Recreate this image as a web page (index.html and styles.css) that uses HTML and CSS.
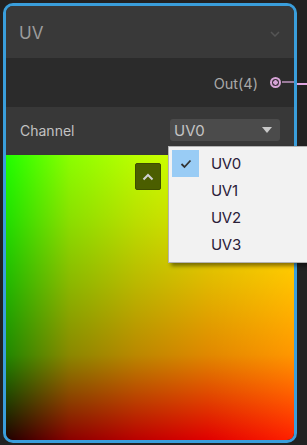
FILE: index.html
```html
<!DOCTYPE html>
<html lang="en">
  <head>
    <meta charset="UTF-8" />
    <meta name="viewport" content="width=device-width, initial-scale=1.0" />
    <title>UV Node</title>
    <link rel="stylesheet" href="styles.css">
  </head>
  <body>
    <div class="canvas">
      <div class="wire"></div>
      <div class="node">
        <div class="node-header">
          <span class="node-title">UV</span>
          <svg class="node-chevron" width="10" height="6" viewBox="0 0 10 6">
            <path d="M1 1 L5 5 L9 1" fill="none" stroke="#555" stroke-width="1.5" />
          </svg>
        </div>
        <div class="node-outputs">
          <span class="port-label">Out(4)</span>
          <span class="port"></span>
        </div>
        <div class="node-controls">
          <span class="control-label">Channel</span>
          <div class="select">
            <span>UV0</span>
            <svg width="10" height="6" viewBox="0 0 10 6">
              <path d="M0 0 L10 0 L5 6 Z" fill="#c8c8c8" />
            </svg>
          </div>
        </div>
        <div class="preview">
          <button class="collapse-btn">
            <svg width="12" height="8" viewBox="0 0 12 8">
              <path d="M1.5 6.5 L6 2 L10.5 6.5" fill="none" stroke="#d0d0d0" stroke-width="2" />
            </svg>
          </button>
        </div>
      </div>

      <ul class="menu">
        <li class="menu-item selected">
          <span class="check">
            <svg width="12" height="10" viewBox="0 0 12 10">
              <path d="M1.5 5 L4.5 8 L10.5 1.5" fill="none" stroke="#333" stroke-width="1.8" />
            </svg>
          </span>
          <span>UV0</span>
        </li>
        <li class="menu-item"><span class="check"></span><span>UV1</span></li>
        <li class="menu-item"><span class="check"></span><span>UV2</span></li>
        <li class="menu-item"><span class="check"></span><span>UV3</span></li>
      </ul>
    </div>
  </body>
</html>
```

FILE: styles.css
```css
body {
  margin: 0;
  padding: 0;
  background-color: #222222;
  font-family: Inter, "Noto Sans", sans-serif;
  width: 307px;
  height: 445px;
  overflow: hidden;
}
.canvas {
  position: relative;
  width: 307px;
  height: 445px;
}
.node {
  position: relative;
  z-index: 1;
  margin: 3px 0 0 3px;
  width: 288px;
  height: 434px;
  border: 3px solid #3a9edb;
  border-radius: 10px;
  overflow: hidden;
  background-color: #262626;
  display: flex;
  flex-direction: column;
}
.node-header {
  height: 52px;
  flex-shrink: 0;
  background-color: #393939;
  display: flex;
  align-items: center;
  justify-content: space-between;
  padding: 0 14px 0 13px;
}
.node-title {
  color: #9c9c9c;
  font-size: 17px;
  padding-top: 2px;
}
.node-chevron {
  margin-top: 4px;
}
.node-outputs {
  height: 49px;
  flex-shrink: 0;
  background-color: #2b2b2b;
  display: flex;
  align-items: center;
  justify-content: flex-end;
  padding-right: 13px;
}
.port-label {
  color: #a8a8a8;
  font-size: 14.5px;
  margin-right: 12px;
  padding-top: 2px;
}
.port {
  position: relative;
  width: 7px;
  height: 7px;
  border: 2px solid #d6a3d6;
  border-radius: 50%;
  background: radial-gradient(circle, #d6a3d6 0 2px, #3c303c 2.5px);
}
.port::after {
  content: "";
  position: absolute;
  left: 10px;
  top: 2px;
  width: 14px;
  height: 2px;
  background-color: #9a7a9a;
}
.node-controls {
  height: 48px;
  flex-shrink: 0;
  background-color: #383838;
  display: flex;
  align-items: center;
  justify-content: space-between;
  padding: 0 14px 0 14px;
}
.control-label {
  color: #c2c2c2;
  font-size: 14px;
  margin-top: -2px;
}
.select {
  width: 98px;
  height: 22px;
  margin-top: -2px;
  border-radius: 3px;
  background-color: #4b4b4b;
  display: flex;
  align-items: center;
  justify-content: space-between;
  padding: 0 8px 0 4px;
  color: #c4c4c4;
  font-size: 15px;
}
.preview {
  flex: 1;
  border-radius: 0 0 6px 6px;
  background-image:
    linear-gradient(to right, #200000, #8a0000 22%, #ba0000 45%, #e00000 70%, #ff2000),
    linear-gradient(to bottom, #00ff00, #00e000 22%, #00b800 45%, #008800 70%, #000000);
  background-blend-mode: screen;
  position: relative;
}
.collapse-btn {
  position: absolute;
  left: 129px;
  top: 8px;
  width: 26px;
  height: 27px;
  padding: 0;
  border: 1px solid #3e4d00;
  border-radius: 2px;
  background-color: #4b5e00;
  display: flex;
  align-items: center;
  justify-content: center;
}
.wire {
  position: absolute;
  z-index: 0;
  left: 290px;
  top: 80px;
  width: 17px;
  height: 2px;
  background-color: #e0a6e0;
}
.menu {
  position: absolute;
  z-index: 2;
  left: 168px;
  top: 143px;
  width: 139px;
  margin: 0;
  padding: 3px 0 5px 0;
  list-style: none;
  background-color: #f2f2f2;
  border: 1px solid #b4b4b4;
  border-right: none;
  box-shadow: 3px 3px 4px rgba(0, 0, 0, 0.45);
  box-sizing: border-box;
  height: 117px;
}
.menu-item {
  height: 27px;
  display: flex;
  align-items: center;
  font-size: 15px;
  color: #2a2038;
  letter-spacing: -0.3px;
}
.check {
  width: 27px;
  height: 27px;
  margin-left: 3px;
  margin-right: 12px;
  display: flex;
  align-items: center;
  justify-content: center;
}
.selected .check {
  background-color: #99ccf5;
}
```
